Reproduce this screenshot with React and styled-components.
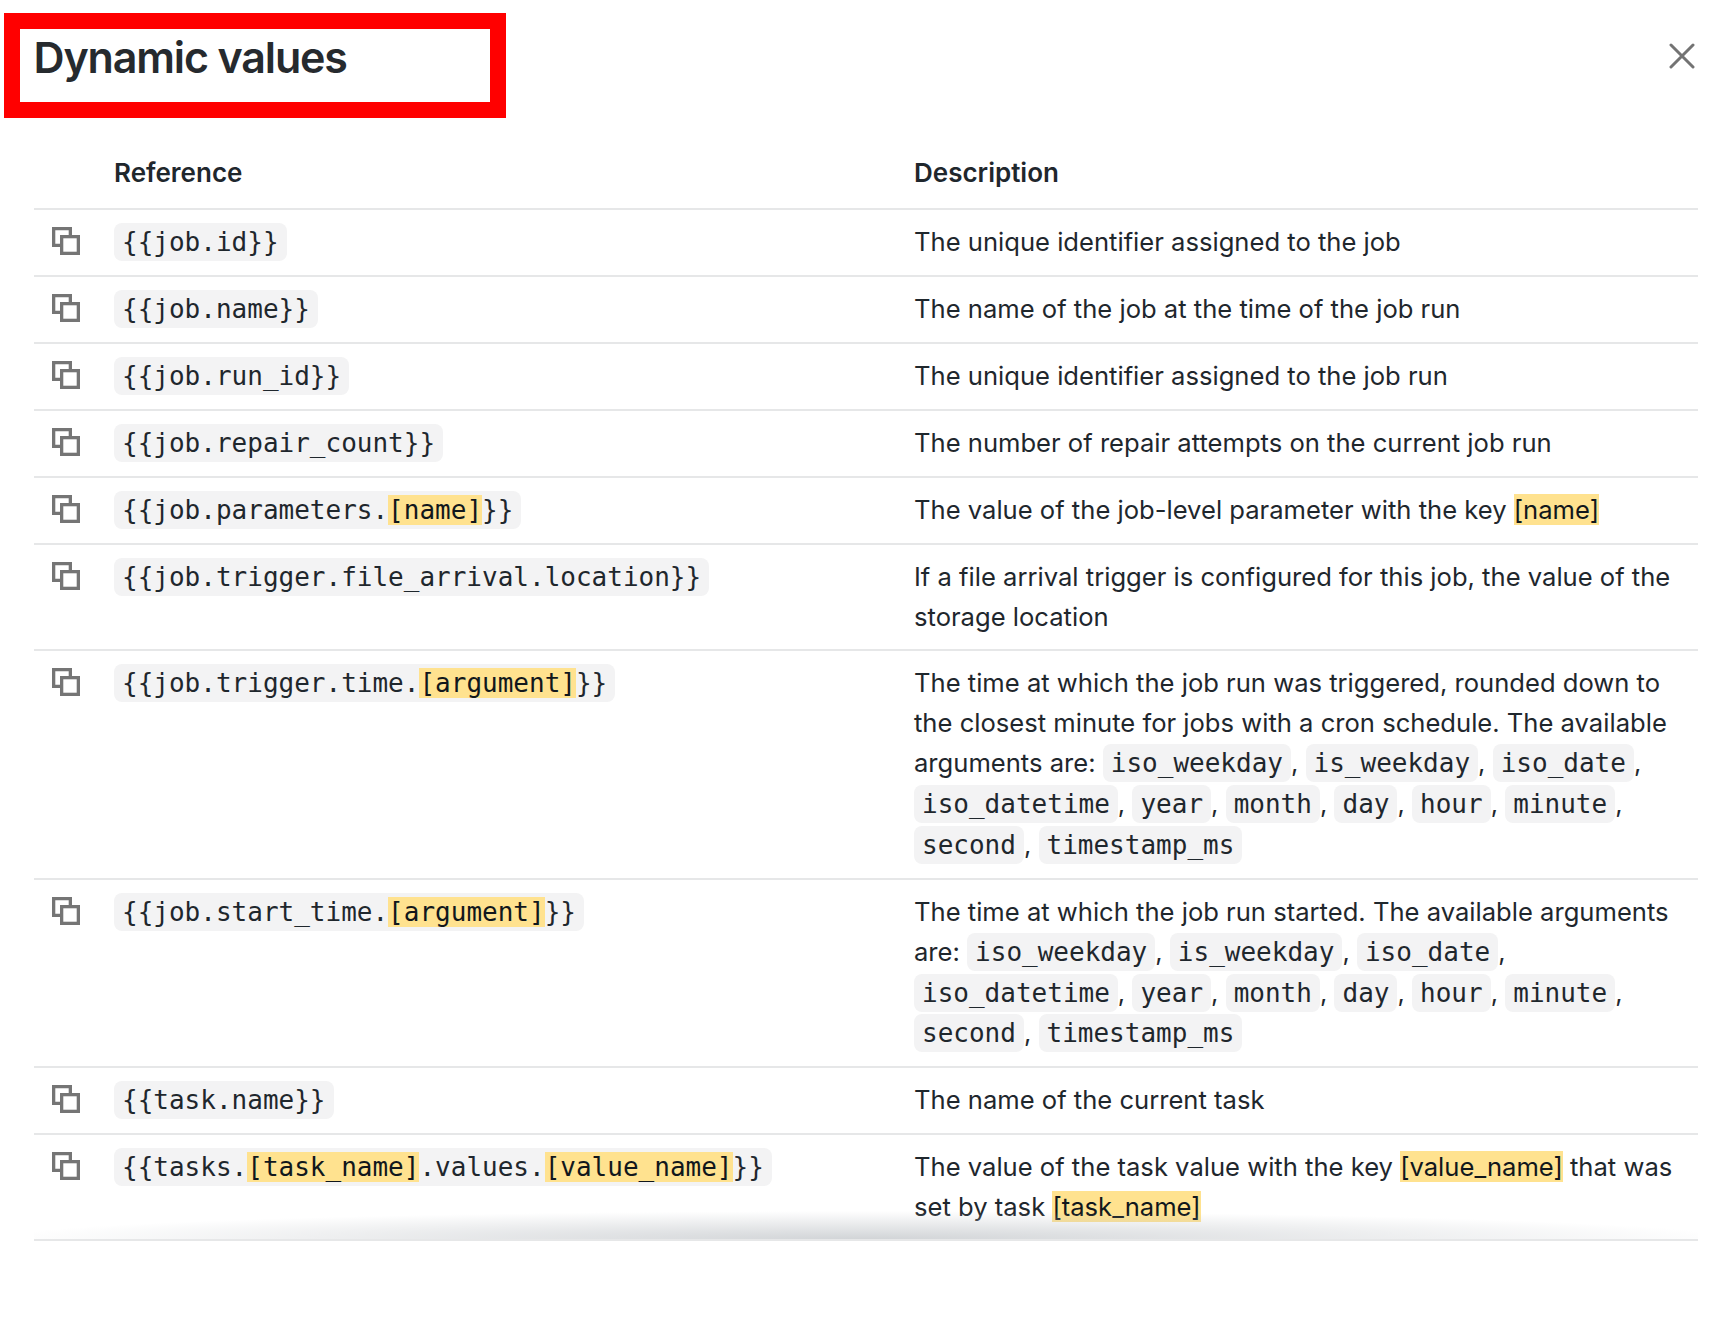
import React from 'react';
import styled, { createGlobalStyle } from 'styled-components';

const GlobalStyle = createGlobalStyle`
    html, body {
        margin: 0;
        background: #fff;
    }
`;

const Modal = styled.div`
    position: relative;
    width: 1728px;
    height: 1336px;
    padding: 28px 30px 0 33.5px;
    box-sizing: border-box;
    color: #1f272d;
    font-family: Inter, 'Noto Sans', sans-serif;
    font-size: 25.6px;
    line-height: 40px;
`;

const TitleBar = styled.div`
    display: flex;
    align-items: flex-start;
    justify-content: space-between;
    height: 110px;
`;

const Title = styled.h1`
    margin: 0;
    font-size: 43px;
    line-height: 58px;
    font-weight: 600;
    letter-spacing: -1.15px;
    color: #262a2e;
`;

const Annotation = styled.div`
    position: absolute;
    left: 4px;
    top: 13px;
    width: 502px;
    height: 105px;
    box-sizing: border-box;
    border: 16px solid #ff0000;
`;

const CloseButton = styled.button`
    display: flex;
    border: 0;
    padding: 0;
    margin: 15px 3px 0 0;
    background: none;
`;

const Table = styled.div`
    position: relative;
`;

const Row = styled.div`
    display: grid;
    grid-template-columns: 80.5px 800px 1fr;
    padding: 12.1px 0;
    border-bottom: 2px solid #e6e7e8;
    box-sizing: border-box;
`;

const HeadRow = styled(Row)`
    height: 72px;
    padding: 15px 0 0;
    font-size: 26px;
    font-weight: 600;
`;

const CopyCell = styled.div`
    padding: 5px 0 0 18.5px;
    line-height: 0;
`;

const Desc = styled.div`
    padding-right: 20px;
`;

const Code = styled.code`
    font-family: 'DejaVu Sans Mono', 'Liberation Mono', monospace;
    font-size: 26px;
    line-height: 40.8px;
    padding: 4px 8px;
    border-radius: 8px;
    background: #f3f3f4;
    color: #1f272d;
    -webkit-box-decoration-break: clone;
    box-decoration-break: clone;
`;

const Mark = styled.mark`
    background: #ffe28f;
    color: #11171c;
`;

const Fade = styled.div`
    position: absolute;
    left: 0;
    right: 0;
    bottom: 2px;
    height: 28px;
    background: radial-gradient(ellipse 52% 100% at 50% 100%, rgba(190, 194, 198, 0.7), rgba(190, 194, 198, 0) 100%);
    pointer-events: none;
`;

const CopyIcon = () => (
    <svg width="28" height="28" viewBox="0 0 28 28" fill="none" stroke="#757575" strokeWidth="3.3">
        <path d="M8 18.35H1.65V1.65H18.35V8" />
        <rect x="9.65" y="9.65" width="16.7" height="16.7" />
    </svg>
);

const CloseIcon = () => (
    <svg width="26" height="26" viewBox="0 0 26 26" fill="none" stroke="#737373" strokeWidth="3" strokeLinecap="round">
        <path d="M2 2L24 24M24 2L2 24" />
    </svg>
);

// a little markup so the rows below stay readable: [x] goes yellow
const marked = (text) =>
    text.split(/(\[[a-z_]+\])/).map((part, i) =>
        part.startsWith('[') ? <Mark key={i}>{part}</Mark> : part
    );

const codeList = (names) =>
    names.map((name, i) => (
        <React.Fragment key={name}>
            <Code>{name}</Code>
            {i < names.length - 1 ? ', ' : ''}
        </React.Fragment>
    ));

const rows = [
    { ref: '{{job.id}}', desc: 'The unique identifier assigned to the job' },
    { ref: '{{job.name}}', desc: 'The name of the job at the time of the job run' },
    { ref: '{{job.run_id}}', desc: 'The unique identifier assigned to the job run' },
    { ref: '{{job.repair_count}}', desc: 'The number of repair attempts on the current job run' },
    { ref: '{{job.parameters.[name]}}', desc: 'The value of the job-level parameter with the key [name]' },
    { ref: '{{job.trigger.file_arrival.location}}', desc: 'If a file arrival trigger is configured for this job, the value of the storage location' },
    {
        ref: '{{job.trigger.time.[argument]}}',
        desc: 'The time at which the job run was triggered, rounded down to the closest minute for jobs with a cron schedule. The available arguments are: ',
        args: ['iso_weekday', 'is_weekday', 'iso_date', 'iso_datetime', 'year', 'month', 'day', 'hour', 'minute', 'second', 'timestamp_ms'],
    },
    {
        ref: '{{job.start_time.[argument]}}',
        desc: 'The time at which the job run started. The available arguments are: ',
        args: ['iso_weekday', 'is_weekday', 'iso_date', 'iso_datetime', 'year', 'month', 'day', 'hour', 'minute', 'second', 'timestamp_ms'],
    },
    { ref: '{{task.name}}', desc: 'The name of the current task' },
    { ref: '{{tasks.[task_name].values.[value_name]}}', desc: 'The value of the task value with the key [value_name] that was set by task [task_name]' },
];

export default function App() {
    return (
        <Modal>
            <GlobalStyle />
            <TitleBar>
                <Title>Dynamic values</Title>
                <CloseButton><CloseIcon /></CloseButton>
            </TitleBar>
            <Annotation />
            <Table>
                <HeadRow>
                    <div />
                    <div>Reference</div>
                    <div>Description</div>
                </HeadRow>
                {rows.map((row) => (
                    <Row key={row.ref}>
                        <CopyCell><CopyIcon /></CopyCell>
                        <div><Code>{marked(row.ref)}</Code></div>
                        <Desc>
                            {marked(row.desc)}
                            {row.args && codeList(row.args)}
                        </Desc>
                    </Row>
                ))}
                <Fade />
            </Table>
        </Modal>
    );
}
